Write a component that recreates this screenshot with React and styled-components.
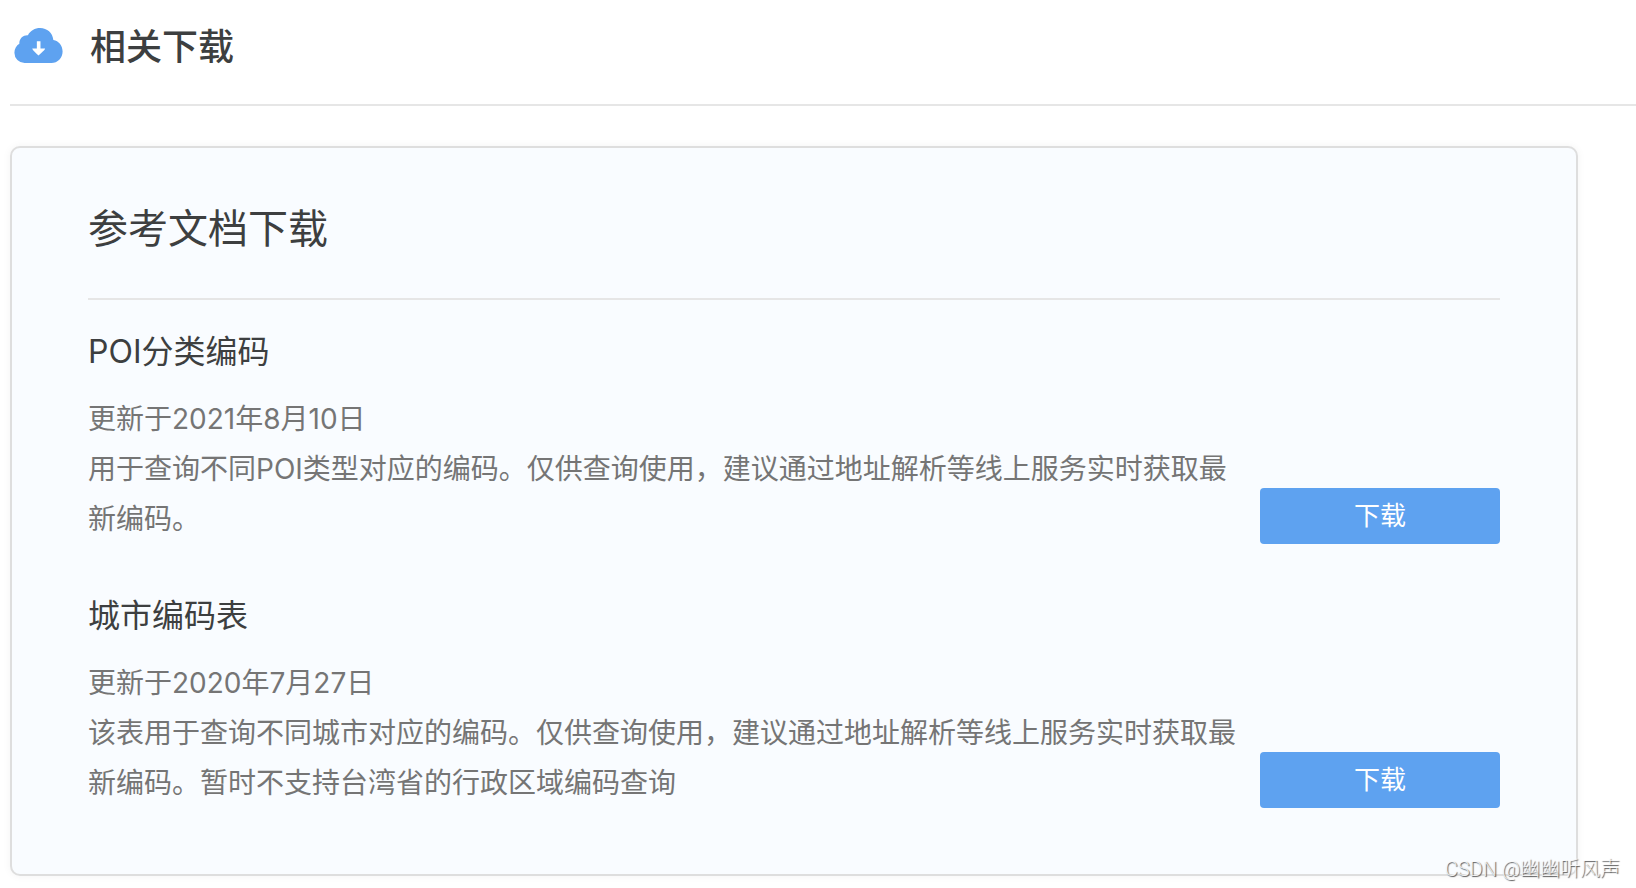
import React from "react";
import styled, { createGlobalStyle } from "styled-components";

const GlobalStyle = createGlobalStyle`
  *, *::before, *::after { box-sizing: border-box; }
  body {
    margin: 0;
    background: #fff;
    color: #3d3f40;
    font-family: Inter, "Noto Sans CJK SC", sans-serif;
  }
  h1, h2, h3, p { margin: 0; }
`;

const Page = styled.main`
  position: relative;
  padding: 0 0 12px 10px;
`;

const Header = styled.header`
  display: flex;
  align-items: center;
  gap: 27px;
  padding: 20px 4px 30px;
  border-bottom: 2px solid #e6e6e6;
`;

const CloudIcon = styled.svg`
  width: 49px;
  height: 35px;
  margin-bottom: 4px;
  flex: none;
`;

const PageTitle = styled.h1`
  font-size: 36px;
  line-height: 54px;
  font-weight: 500;
`;

const Card = styled.section`
  margin: 40px 58px 0 0;
  padding: 51px 76px 66px;
  background: #f9fcff;
  border: 2px solid #dedede;
  border-radius: 10px;
  box-shadow: 0 0 8px rgba(0, 0, 0, 0.05);
`;

const CardTitle = styled.h2`
  padding-bottom: 39px;
  border-bottom: 2px solid #e6e6e6;
  font-size: 40px;
  line-height: 60px;
  font-weight: 400;
`;

const List = styled.div`
  display: flex;
  flex-direction: column;
  gap: 50px;
  padding-top: 30px;
`;

const Item = styled.article`
  display: flex;
  align-items: flex-end;
  gap: 20px;
`;

const ItemText = styled.div`
  flex: 1;
  min-width: 0;
`;

const ItemTitle = styled.h3`
  margin-bottom: 20px;
  font-size: 32px;
  line-height: 44px;
  font-weight: 400;
`;

const Line = styled.p`
  color: #757575;
  font-size: 28px;
  line-height: 50px;
`;

const DownloadButton = styled.button`
  flex: none;
  width: 240px;
  height: 56px;
  padding: 0;
  border: 0;
  border-radius: 4px;
  background: #5ea2f0;
  color: #fff;
  font-family: inherit;
  font-size: 26px;
  line-height: 56px;
  cursor: pointer;
`;

const Watermark = styled.span`
  position: absolute;
  right: 16px;
  bottom: 4px;
  color: rgba(255, 255, 255, 0.8);
  font-family: Roboto, "Noto Sans CJK SC", sans-serif;
  font-size: 20px;
  line-height: 30px;
  font-weight: 300;
  text-shadow: 1px 1px 1px #555;
  pointer-events: none;
`;

const documents = [
  {
    title: "POI分类编码",
    updated: "更新于2021年8月10日",
    text: "用于查询不同POI类型对应的编码。仅供查询使用，建议通过地址解析等线上服务实时获取最新编码。",
  },
  {
    title: "城市编码表",
    updated: "更新于2020年7月27日",
    text: "该表用于查询不同城市对应的编码。仅供查询使用，建议通过地址解析等线上服务实时获取最新编码。暂时不支持台湾省的行政区域编码查询",
  },
];

export default function App() {
  return (
    <>
      <GlobalStyle />
      <Page lang="zh-CN">
        <Header>
          <CloudIcon viewBox="0 0 146 106" aria-hidden="true">
            <path
              fill="#5ea2f0"
              d="M31 106A31 31 0 0 1 0 75C0 64 6 53 15 48V44C16 31 27 21 41 22C48 8 62 0 78 0C99 0 116 15 118 36C134 38 146 53 146 71C146 90 131 106 112 106Z"
            />
            <path fill="#fff" d="M68 40H79V62H93C92 67 82 75 73 83C64 75 55 67 54 62H68Z" />
          </CloudIcon>
          <PageTitle>相关下载</PageTitle>
        </Header>
        <Card>
          <CardTitle>参考文档下载</CardTitle>
          <List>
            {documents.map((doc) => (
              <Item key={doc.title}>
                <ItemText>
                  <ItemTitle>{doc.title}</ItemTitle>
                  <Line>{doc.updated}</Line>
                  <Line>{doc.text}</Line>
                </ItemText>
                <DownloadButton type="button">下载</DownloadButton>
              </Item>
            ))}
          </List>
        </Card>
        <Watermark>CSDN @幽幽听风声</Watermark>
      </Page>
    </>
  );
}
